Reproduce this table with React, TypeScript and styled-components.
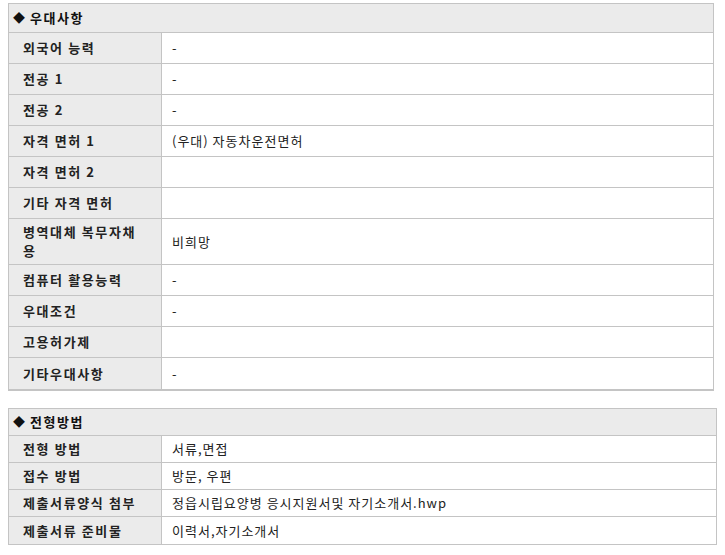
import React from "react";
import styled, { createGlobalStyle } from "styled-components";

const Global = createGlobalStyle`
  html, body { margin: 0; padding: 0; background: #fff; }
  body {
    font-family: "Noto Sans CJK KR", "Noto Sans", sans-serif;
    font-size: 13px;
    color: #222;
  }
`;

const Page = styled.div`
  padding: 3px 0 0 8px;
  display: flex;
  flex-direction: column;
  gap: 17px;
`;

const Table = styled.div<{ $width: number; $thickBottom?: boolean }>`
  width: ${(p) => p.$width}px;
  box-sizing: border-box;
  border: 1px solid #c4c4c4;
  border-bottom-width: ${(p) => (p.$thickBottom ? 2 : 1)}px;
  display: grid;
  grid-template-columns: 153px 1fr;
`;

const Header = styled.div<{ $h: number }>`
  grid-column: 1 / -1;
  background: #ebebeb;
  height: ${(p) => p.$h}px;
  box-sizing: border-box;
  display: flex;
  align-items: center;
  padding-left: 4px;
  font-weight: 700;
  font-size: 13px;
  line-height: 18px;
  color: #111;
  border-bottom: 1px solid #c4c4c4;
  letter-spacing: 1.5px;
`;

const Diamond = styled.span`
  font-size: 12px;
  margin-right: 5px;
  letter-spacing: 0;
`;

const Label = styled.div<{ $h: number; $last?: boolean }>`
  background: #ebebeb;
  min-height: ${(p) => p.$h}px;
  box-sizing: border-box;
  display: flex;
  align-items: center;
  padding: 3px 18px 4px 14px;
  font-weight: 700;
  color: #222;
  line-height: 19px;
  letter-spacing: 1.6px;
  word-break: break-all;
  border-right: 1px solid #c4c4c4;
  border-bottom: ${(p) => (p.$last ? "none" : "1px solid #c4c4c4")};
`;

const Value = styled.div<{ $h: number; $last?: boolean }>`
  min-height: ${(p) => p.$h}px;
  box-sizing: border-box;
  display: flex;
  align-items: center;
  padding: 3px 10px 4px;
  color: #222;
  line-height: 19px;
  letter-spacing: 1px;
  border-bottom: ${(p) => (p.$last ? "none" : "1px solid #c4c4c4")};
`;

type Row = [string, string];

const benefits: Row[] = [
  ["외국어 능력", "-"],
  ["전공 1", "-"],
  ["전공 2", "-"],
  ["자격 면허 1", "(우대) 자동차운전면허"],
  ["자격 면허 2", ""],
  ["기타 자격 면허", ""],
  ["병역대체 복무자채용", "비희망"],
  ["컴퓨터 활용능력", "-"],
  ["우대조건", "-"],
  ["고용허가제", ""],
  ["기타우대사항", "-"],
];

const selection: Row[] = [
  ["전형 방법", "서류,면접"],
  ["접수 방법", "방문, 우편"],
  ["제출서류양식 첨부", "정읍시립요양병 응시지원서및 자기소개서.hwp"],
  ["제출서류 준비물", "이력서,자기소개서"],
];

function Section({
  title,
  rows,
  width,
  headerH,
  rowH,
  thickBottom,
}: {
  title: string;
  rows: Row[];
  width: number;
  headerH: number;
  rowH: number;
  thickBottom?: boolean;
}) {
  return (
    <Table $width={width} $thickBottom={thickBottom}>
      <Header $h={headerH}>
        <Diamond>◆</Diamond>
        {title}
      </Header>
      {rows.map(([l, v], i) => {
        const last = i === rows.length - 1;
        return (
          <React.Fragment key={l}>
            <Label $h={rowH} $last={last}>
              {l}
            </Label>
            <Value $h={rowH} $last={last}>
              {v}
            </Value>
          </React.Fragment>
        );
      })}
    </Table>
  );
}

export default function App() {
  return (
    <>
      <Global />
      <Page>
        <Section title="우대사항" rows={benefits} width={706} headerH={29} rowH={31} thickBottom />
        <Section title="전형방법" rows={selection} width={709} headerH={27} rowH={27} />
      </Page>
    </>
  );
}
